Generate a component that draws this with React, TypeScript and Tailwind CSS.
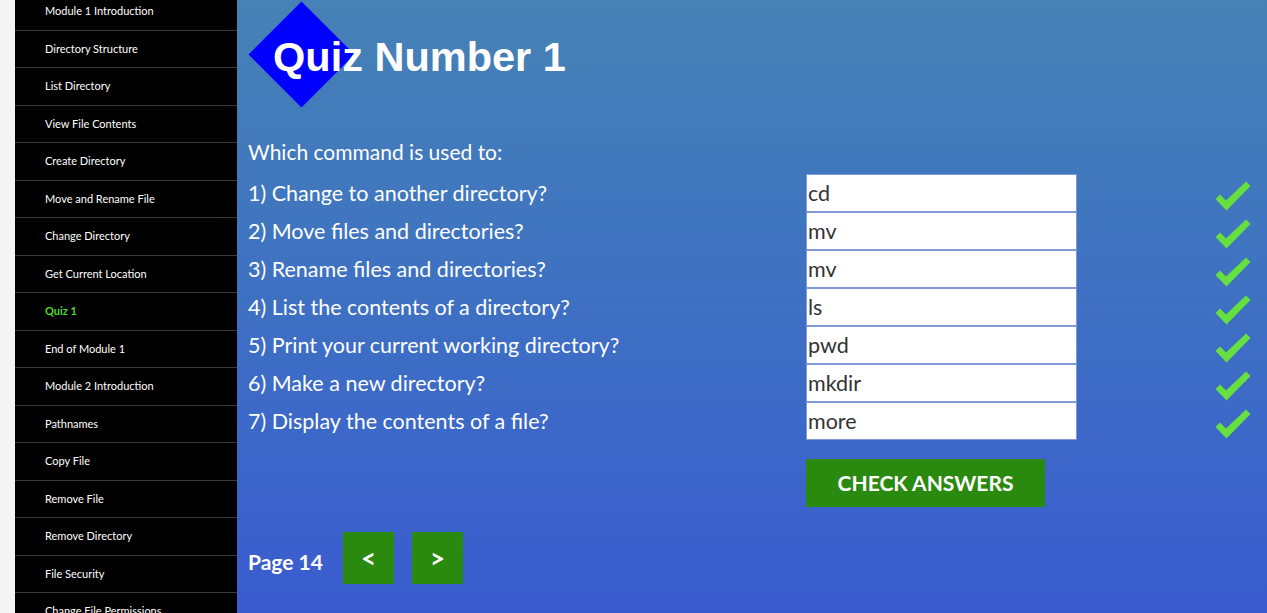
import React from "react";

const items = [
  "Module 1 Introduction",
  "Directory Structure",
  "List Directory",
  "View File Contents",
  "Create Directory",
  "Move and Rename File",
  "Change Directory",
  "Get Current Location",
  "Quiz 1",
  "End of Module 1",
  "Module 2 Introduction",
  "Pathnames",
  "Copy File",
  "Remove File",
  "Remove Directory",
  "File Security",
  "Change File Permissions",
];

const questions: [string, string][] = [
  ["1) Change to another directory?", "cd"],
  ["2) Move files and directories?", "mv"],
  ["3) Rename files and directories?", "mv"],
  ["4) List the contents of a directory?", "ls"],
  ["5) Print your current working directory?", "pwd"],
  ["6) Make a new directory?", "mkdir"],
  ["7) Display the contents of a file?", "more"],
];

function Check() {
  return (
    <svg width="36" height="31" viewBox="0 0 36 31">
      <path d="M0.5 18 L5 13.5 L11 19.5 L31 0.5 L35.5 5 L11.5 29.5 Z" fill="#66e03f" />
    </svg>
  );
}

export default function App() {
  return (
    <div
      className="flex h-[613px] w-[1267px] overflow-hidden bg-[#f4f4f4]"
      style={{ fontFamily: "Lato, 'Open Sans', sans-serif" }}
    >
      <div className="ml-[15px] w-[222px] shrink-0 bg-black">
        <div className="mt-[-7px]">
          {items.map((it) => (
            <div
              key={it}
              className={
                "flex h-[37.5px] items-center border-b border-[#3a3a3a] pl-[30px] text-[11px] " +
                (it === "Quiz 1" ? "font-bold text-[#4fd82e]" : "text-white")
              }
            >
              {it}
            </div>
          ))}
        </div>
      </div>
      <div className="flex-1 bg-gradient-to-b from-[#4682b5] to-[#3a5bcf] pl-[11px] pr-[16px]">
        <div className="relative h-[139px]">
          <div className="absolute left-[16px] top-[17px] h-[75px] w-[75px] rotate-45 bg-[#0000ff]" />
          <h1
            className="relative pl-[25px] pt-[29px] text-[41.5px] font-bold leading-[56px] text-white"
            style={{ fontFamily: "'Liberation Sans', Arial, sans-serif" }}
          >
            Quiz Number 1
          </h1>
        </div>
        <div className="text-[21px] leading-[26px] text-white">Which command is used to:</div>
        <div className="mt-[9px] flex flex-col">
          {questions.map(([q, a], i) => (
            <div key={i} className="flex h-[38px] items-center">
              <div className="w-[558px] text-[21.5px] text-white">{q}</div>
              <div className="flex h-[38px] w-[271px] items-center border border-[#7f9ad8] bg-white pl-[1px] text-[21.5px] text-[#333]">
                {a}
              </div>
              <div className="ml-auto mt-[6px] flex w-[36px] items-center">
                <Check />
              </div>
            </div>
          ))}
        </div>
        <div className="mt-[19px] pl-[558px]">
          <button className="h-[48px] w-[239px] bg-[#2a8a0f] text-[21px] font-bold uppercase text-white">
            Check Answers
          </button>
        </div>
        <div className="mt-[25px] flex items-center">
          <span className="mt-[8px] text-[21px] font-bold text-white">Page 14</span>
          <button className="ml-[20px] h-[52px] w-[51px] bg-[#2a8a0f] text-[26px] font-bold text-white">
            &lt;
          </button>
          <button className="ml-[18px] h-[52px] w-[51px] bg-[#2a8a0f] text-[26px] font-bold text-white">
            &gt;
          </button>
        </div>
      </div>
    </div>
  );
}
